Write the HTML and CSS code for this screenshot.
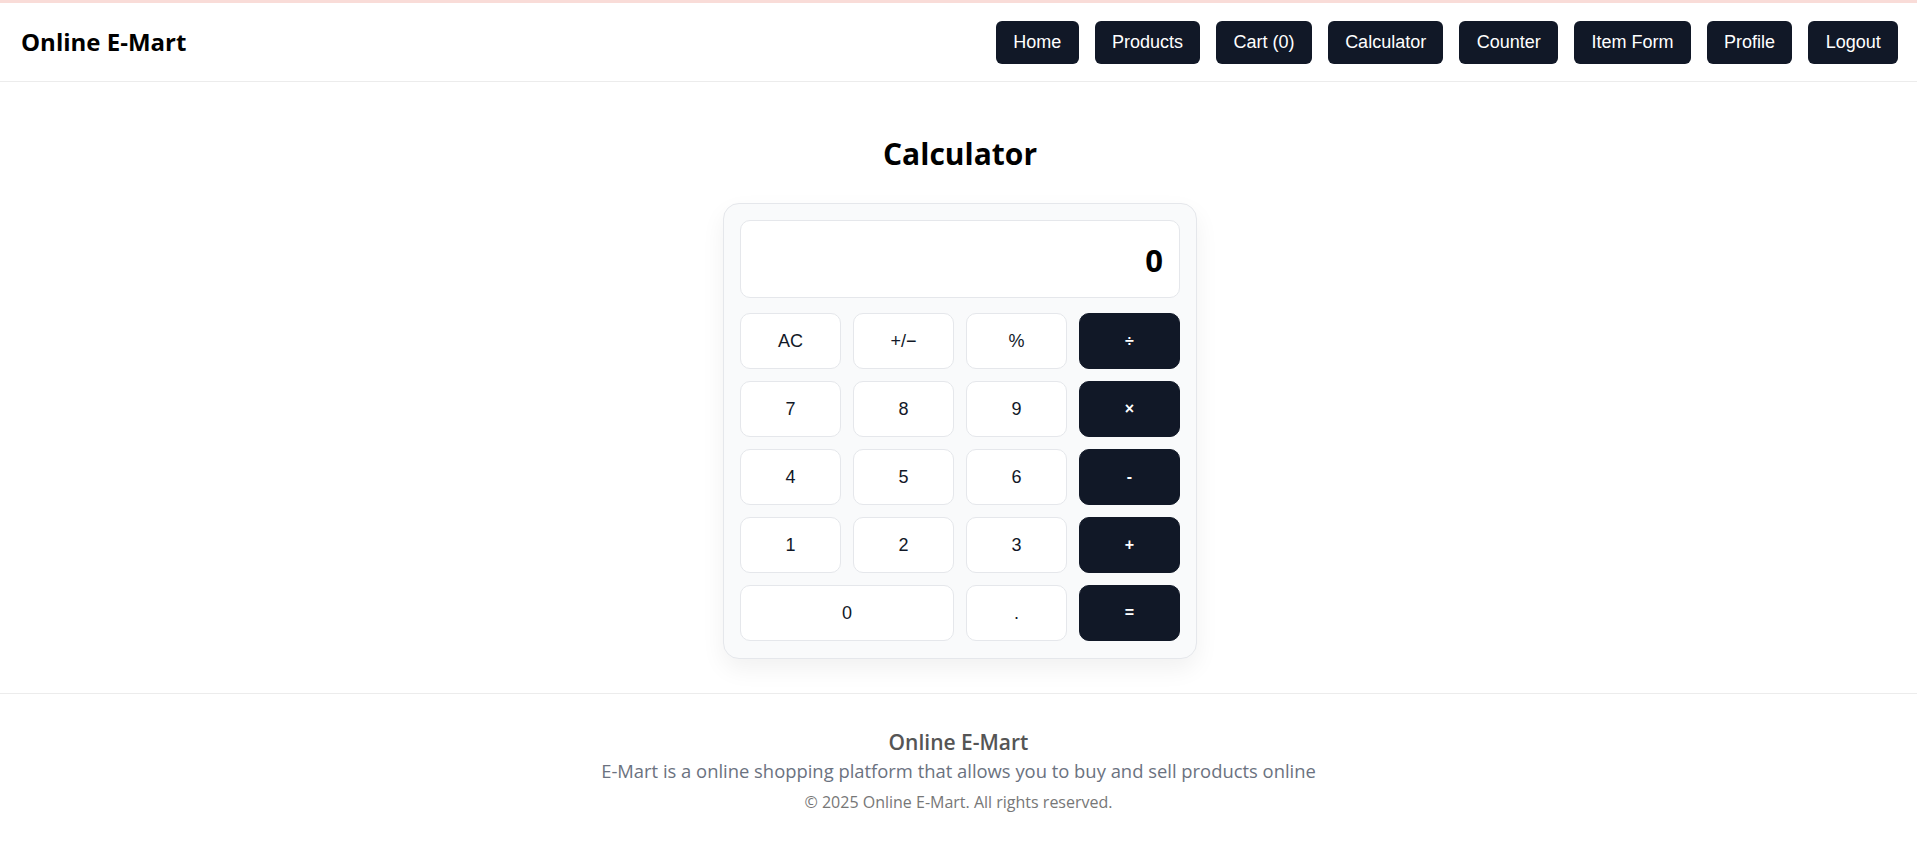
FILE: index.html
```html
<!DOCTYPE html>
<html lang="en">
<head>
<meta charset="utf-8">
<title>Online E-Mart - Calculator</title>
<link rel="stylesheet" href="styles.css">
</head>
<body>
<div class="topline"></div>
<header class="header">
  <div class="logo">Online E-Mart</div>
  <nav class="nav">
    <a class="nav-btn" href="#">Home</a>
    <a class="nav-btn" href="#">Products</a>
    <a class="nav-btn" href="#">Cart (0)</a>
    <a class="nav-btn" href="#">Calculator</a>
    <a class="nav-btn" href="#">Counter</a>
    <a class="nav-btn" href="#">Item Form</a>
    <a class="nav-btn" href="#">Profile</a>
    <a class="nav-btn" href="#">Logout</a>
  </nav>
</header>
<main class="main">
  <h1 class="title">Calculator</h1>
  <div class="calc">
    <div class="display">0</div>
    <div class="keys">
      <button class="key">AC</button>
      <button class="key">+/&minus;</button>
      <button class="key">%</button>
      <button class="key op">&divide;</button>
      <button class="key">7</button>
      <button class="key">8</button>
      <button class="key">9</button>
      <button class="key op">&times;</button>
      <button class="key">4</button>
      <button class="key">5</button>
      <button class="key">6</button>
      <button class="key op">-</button>
      <button class="key">1</button>
      <button class="key">2</button>
      <button class="key">3</button>
      <button class="key op">+</button>
      <button class="key wide">0</button>
      <button class="key">.</button>
      <button class="key op">=</button>
    </div>
  </div>
</main>
<footer class="footer">
  <div class="footer-title">Online E-Mart</div>
  <p class="footer-desc">E-Mart is a online shopping platform that allows you to buy and sell products online</p>
  <p class="footer-copy">&copy; 2025 Online E-Mart. All rights reserved.</p>
</footer>
</body>
</html>
```
FILE: styles.css
```css
* { box-sizing: border-box; }
body {
  margin: 0;
  font-family: "Open Sans", "Noto Sans", sans-serif;
  color: #000;
  background: #fff;
}
.topline {
  height: 3px;
  background: #f9dcd8;
}
.header {
  height: 79px;
  padding: 0 19px 0 21px;
  display: flex;
  align-items: center;
  justify-content: space-between;
  border-bottom: 1px solid #ececec;
}
.logo {
  font-size: 24px;
  font-weight: 700;
  line-height: 30px;
}
.nav {
  display: flex;
  gap: 16px;
}
.nav-btn {
  display: flex;
  align-items: center;
  height: 43px;
  padding: 0 17.3px;
  background: #111827;
  color: #fff;
  border-radius: 6px;
  text-decoration: none;
  font-family: "Liberation Sans", Arial, sans-serif;
  font-size: 18px;
}
.main {
  padding: 32px 0 34px;
  display: flex;
  flex-direction: column;
  align-items: center;
}
.title {
  margin: 21px 0 30px;
  font-size: 30px;
  font-weight: 700;
  line-height: 38px;
  padding-left: 3px;
}
.calc {
  width: 474px;
  margin-left: 3px;
  padding: 16px 16px 17px;
  background: #f9fafb;
  border: 1px solid #e5e7eb;
  border-radius: 16px;
  box-shadow: 0 10px 25px rgba(0, 0, 0, 0.06);
}
.display {
  height: 78px;
  display: flex;
  align-items: center;
  justify-content: flex-end;
  padding: 2px 16px 0;
  background: #fff;
  border: 1px solid #e5e7eb;
  border-radius: 10px;
  font-size: 31px;
  font-weight: 700;
  margin-bottom: 15px;
}
.keys {
  display: grid;
  grid-template-columns: repeat(4, 1fr);
  grid-auto-rows: 56px;
  gap: 12px;
}
.key {
  border: 1px solid #e5e7eb;
  border-radius: 10px;
  background: #fff;
  color: #111827;
  font-family: "Liberation Sans", Arial, sans-serif;
  font-size: 18px;
  padding: 0;
}
.key.op {
  background: #111827;
  border-color: #111827;
  color: #fff;
  font-weight: 700;
  font-size: 16px;
}
.key.wide {
  grid-column: span 2;
}
.footer {
  border-top: 1px solid #ececec;
  padding: 36px 0 40px;
  text-align: center;
}
.footer-title {
  font-size: 21px;
  font-weight: 600;
  color: #555;
  line-height: 25px;
}
.footer-desc {
  margin: 5px 0 0;
  font-size: 18.4px;
  color: #6b7280;
  line-height: 22px;
}
.footer-copy {
  margin: 10px 0 0;
  font-size: 16px;
  color: #777;
  line-height: 20px;
}
```
